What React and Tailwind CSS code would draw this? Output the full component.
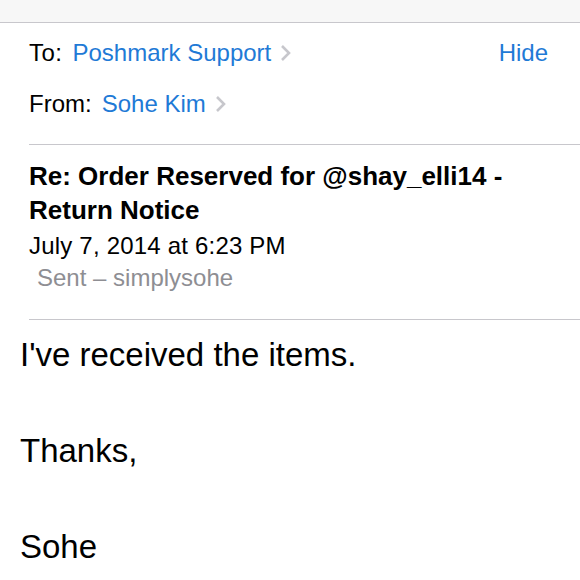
export default function App() {
  const font = { fontFamily: '"Liberation Sans", Arial, sans-serif' };
  return (
    <div className="w-[580px] h-[580px] bg-white overflow-hidden text-black" style={font}>
      <div className="h-[23px] bg-[#f7f7f7] border-b border-[#c8c7cc]" />
      <div className="pl-[29px]">
        <div className="h-[60px] flex items-center justify-between pr-[32px] text-[24px]">
          <div className="flex items-center">
            <span className="tracking-[0.5px]">To:</span>
            <span className="ml-[10px] text-[#1f7ad6]">Poshmark Support</span>
            <Chevron />
          </div>
          <span className="text-[#1f7ad6]">Hide</span>
        </div>
        <div className="h-[42px] flex items-center text-[24px]">
          <span>From:</span>
          <span className="ml-[10px] text-[#1f7ad6]">Sohe Kim</span>
          <Chevron />
        </div>
        <div className="h-[19px]" />
        <div className="border-t border-[#c8c7cc] pt-[14px]">
          <div className="font-bold text-[26px] leading-[34px] pr-[40px]">
            Re: Order Reserved for @shay_elli14 - Return Notice
          </div>
          <div className="text-[24px] leading-[38px] tracking-[0.2px]">July 7, 2014 at 6:23 PM</div>
          <div className="pl-[8px] text-[24px] leading-[26px] text-[#8e8e93]">Sent – simplysohe</div>
          <div className="h-[28px]" />
        </div>
      </div>
      <div className="ml-[29px] border-t border-[#c8c7cc]" />
      <div className="pl-[20px] pt-[11px] text-[33px] leading-[48px]">
        <div>I've received the items.</div>
        <div className="h-[48px]" />
        <div>Thanks,</div>
        <div className="h-[48px]" />
        <div>Sohe</div>
      </div>
    </div>
  );
}

function Chevron() {
  return (
    <svg className="ml-[9px]" width="11" height="18" viewBox="0 0 11 18" fill="none">
      <path d="M2 2l7 7-7 7" stroke="#c7c7cc" strokeWidth="2.6" />
    </svg>
  );
}
